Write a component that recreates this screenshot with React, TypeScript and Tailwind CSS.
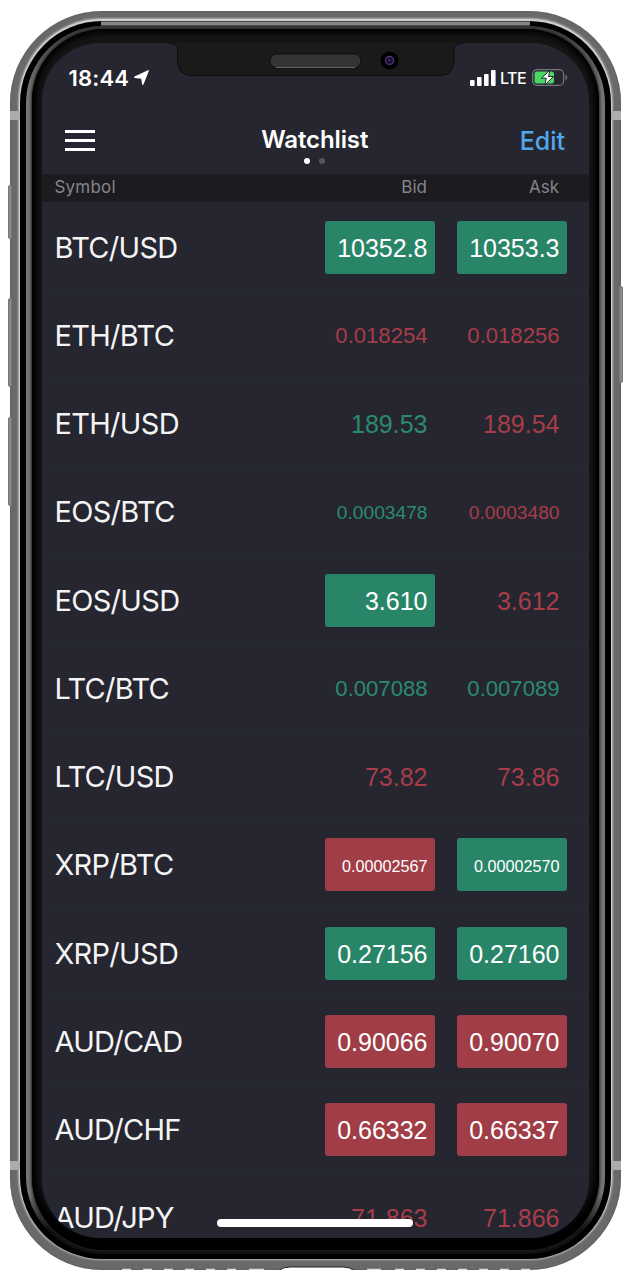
import React from "react";
import clsx from "clsx";

type Side = "up" | "down";

type Price = {
  value: string;
  side: Side;
  filled?: boolean;
};

type Quote = {
  symbol: string;
  bid: Price;
  ask: Price;
};

const up = (value: string, filled = false): Price => ({ value, side: "up", filled });
const down = (value: string, filled = false): Price => ({ value, side: "down", filled });

const quotes: Quote[] = [
  { symbol: "BTC/USD", bid: up("10352.8", true), ask: up("10353.3", true) },
  { symbol: "ETH/BTC", bid: down("0.018254"), ask: down("0.018256") },
  { symbol: "ETH/USD", bid: up("189.53"), ask: down("189.54") },
  { symbol: "EOS/BTC", bid: up("0.0003478"), ask: down("0.0003480") },
  { symbol: "EOS/USD", bid: up("3.610", true), ask: down("3.612") },
  { symbol: "LTC/BTC", bid: up("0.007088"), ask: up("0.007089") },
  { symbol: "LTC/USD", bid: down("73.82"), ask: down("73.86") },
  { symbol: "XRP/BTC", bid: down("0.00002567", true), ask: up("0.00002570", true) },
  { symbol: "XRP/USD", bid: up("0.27156", true), ask: up("0.27160", true) },
  { symbol: "AUD/CAD", bid: down("0.90066", true), ask: down("0.90070", true) },
  { symbol: "AUD/CHF", bid: down("0.66332", true), ask: down("0.66337", true) },
  { symbol: "AUD/JPY", bid: down("71.863"), ask: down("71.866") },
];

// long prices shrink so that they stay inside the cell
function priceSize(value: string) {
  if (value.length >= 10) return "text-[16.2px]";
  if (value.length === 9) return "text-[19.2px]";
  if (value.length === 8) return "text-[22.1px]";
  return "text-[25px]";
}

function PriceCell({ price }: { price: Price }) {
  return (
    <div
      className={clsx(
        "flex h-[53px] w-[110px] items-center justify-end rounded-[3px] pr-[7.5px] pt-[2px] font-['Liberation_Sans',sans-serif] leading-none",
        priceSize(price.value),
        price.filled && "text-white",
        price.filled && (price.side === "up" ? "bg-[#298568]" : "bg-[#a03d47]"),
        !price.filled && (price.side === "up" ? "text-[#2a8b6e]" : "text-[#a73d48]")
      )}
    >
      {price.value}
    </div>
  );
}

function QuoteRow({ quote }: { quote: Quote }) {
  return (
    <div className="flex h-[88.25px] shrink-0 items-center border-b border-[#292a38] pl-[12.5px] pr-[22px] pt-[4px]">
      <p className="flex-1 text-[29px] leading-none tracking-[-0.7px] text-[#f4f4f5]">{quote.symbol}</p>
      <div className="flex gap-[22px]">
        <PriceCell price={quote.bid} />
        <PriceCell price={quote.ask} />
      </div>
    </div>
  );
}

function StatusBar() {
  return (
    <div className="flex h-[69px] shrink-0 items-center justify-between pl-[26.5px] pr-[21px]">
      <div className="flex items-center gap-[5px]">
        <p className="text-[22px] font-semibold leading-none tracking-[0.2px] text-white">18:44</p>
        <svg width="15" height="15" viewBox="0 0 15 15">
          <path d="M14.200 .8 8.800 14.200 7.800 8 .8 7.200Z" fill="#fff" stroke="#fff" strokeWidth="1.400" strokeLinejoin="round" />
        </svg>
      </div>
      <div className="flex items-center">
        <svg width="26" height="16" viewBox="0 0 26 16" fill="#fff">
          <rect x="0" y="10" width="4.6" height="6" rx="1" />
          <rect x="7" y="7" width="4.6" height="9" rx="1" />
          <rect x="14" y="4" width="4.6" height="12" rx="1" />
          <rect x="21" y="0" width="4.6" height="16" rx="1" />
        </svg>
        <p className="ml-[4px] w-[28px] text-[16px] font-medium leading-none tracking-[-0.5px] text-white">LTE</p>
        <svg className="ml-[4px]" width="36" height="17" viewBox="0 0 36 17">
          <rect x=".6" y=".6" width="31" height="15.8" rx="4.5" fill="none" stroke="#777780" strokeWidth="1.2" />
          <path d="M33.500 5.500c2 .8 2 5.200 0 6Z" fill="#777780" />
          <rect x="2.500" y="2.500" width="19.500" height="12" rx="2.500" fill="#4bd763" />
          <path d="M18 1 9.500 9.200h4.800L12.800 16 21.500 7.500h-5Z" fill="#fff" stroke="#262630" strokeWidth="1" />
        </svg>
      </div>
    </div>
  );
}

function NavBar() {
  return (
    <div className="grid h-[61.5px] shrink-0 grid-cols-3 pl-[22.5px] pr-[24px]">
      <div className="flex flex-col gap-[6px] pt-[18px]">
        <span className="h-[3px] w-[30px] bg-white" />
        <span className="h-[3px] w-[30px] bg-white" />
        <span className="h-[3px] w-[30px] bg-white" />
      </div>
      <div className="flex flex-col items-center pt-[16px]">
        <p className="text-[24px] font-semibold leading-[24px] tracking-[-0.1px] text-white">Watchlist</p>
        <div className="mt-[6px] flex gap-[9px]">
          <span className="size-[6px] rounded-full bg-white" />
          <span className="size-[6px] rounded-full bg-[#55555f]" />
        </div>
      </div>
      <p className="pt-[16px] text-right text-[25px] font-medium leading-[26px] text-[#50a7ea]">Edit</p>
    </div>
  );
}

function TableHead() {
  return (
    <div className="flex h-[28px] shrink-0 items-center bg-[#1b1b20] pb-[1px] pl-[12.5px] pr-[30px] text-[17px] leading-none text-[#85858a]">
      <p className="flex-1 tracking-[0.2px]">Symbol</p>
      <p className="w-[110px] text-right">Bid</p>
      <p className="w-[132px] text-right">Ask</p>
    </div>
  );
}

function Notch() {
  return (
    <svg className="absolute left-[127px] top-[-1px]" width="294" height="36" viewBox="0 0 294 36">
      <path d="M0 1.5H2Q8.500 1.500 8.500 9V18Q8.500 33.500 23 33.500H271Q285 33.500 285 18V9Q285 1.500 292 1.500H294V0H0Z" fill="#1a1a1a" stroke="#0c0c0f" />
      <path d="M3 0H291V1.500H3Z" fill="#1a1a1a" />
      <rect x="101" y="12" width="91" height="14" rx="7" fill="#343434" stroke="#0f0f0f" />
      <path d="M107 25.500h79" stroke="#656565" />
      <circle cx="220.500" cy="18.500" r="9" fill="#000" />
      <circle cx="220.500" cy="18.500" r="4" fill="#150c28" stroke="#51358a" strokeWidth="1.300" />
      <circle cx="220.500" cy="18.500" r="1.300" fill="#3f2e60" />
    </svg>
  );
}

function Speakers() {
  return (
    <svg className="absolute bottom-0 left-0" width="611" height="5" viewBox="0 0 611 5">
      <path d="M112 4.500h9M133 4.500h9M154 4.500h9M175 4.500h9M196 4.500h9M217 4.500h9M239 4.500h15M357 4.500h14M385 4.500h9M406 4.500h9M427 4.500h9M448 4.500h9M469 4.500h9M490 4.500h9M511 4.500h9" stroke="#dedede" strokeWidth="1.500" />
      <path d="M269 5.500Q273 2 280 2H333Q340 2 344 5.500Z" fill="#fff" stroke="#222" />
    </svg>
  );
}

function App() {
  return (
    <div className="h-[1286px] w-[640px] overflow-hidden bg-white pl-[10px] pt-[11px] font-['Inter',sans-serif]">
      {/* steel frame */}
      <div className="relative h-[1259px] w-[611px] rounded-[92px] bg-[#696969] p-[10px] shadow-[inset_0_0_2px_#555]">
        {/* side buttons */}
        <span className="absolute left-[-2px] top-[174px] h-[54px] w-[4px] rounded-l-[2px] border border-[#777] bg-[#8a8a8a]" />
        <span className="absolute left-[-2px] top-[287px] h-[89px] w-[4px] rounded-l-[2px] border border-[#777] bg-[#8a8a8a]" />
        <span className="absolute left-[-2px] top-[406px] h-[89px] w-[4px] rounded-l-[2px] border border-[#777] bg-[#8a8a8a]" />
        <span className="absolute right-[-2px] top-[275px] h-[97px] w-[4px] rounded-r-[2px] border border-[#777] bg-[#8a8a8a]" />
        <Speakers />
        {/* polished edge, black gasket and inner bevel */}
        <div className="h-[1238px] rounded-[82px] bg-black shadow-[0_-1px_0_1px_#cfcfcf,0_-1px_2px_2px_#b5b5b5]">
          <div className="flex h-full justify-center rounded-[82px] px-[6px] pb-[5px] pt-[5px]">
            <div className="h-full w-full rounded-[77px] bg-[linear-gradient(#3c3c3c,#757575_5%,#757575_95%,#101010_98%)] px-[6px] pb-[4px] pt-[3px]">
              <div className="h-full rounded-[72px] bg-[#151515] px-[10px] pt-[14px] shadow-[0_0_3px_1px_#222,inset_0_0_6px_4px_#000,inset_0_-14px_8px_#000]">
                <div className="relative flex h-[1195px] w-[547px] flex-col overflow-hidden rounded-[58px] bg-[#262630]">
                  <StatusBar />
                  <NavBar />
                  <TableHead />
                  {quotes.map((quote) => (
                    <QuoteRow quote={quote} key={quote.symbol} />
                  ))}
                  <Notch />
                  <span className="absolute left-[175px] top-[1176px] h-[8px] w-[196px] rounded-full bg-white" />
                </div>
              </div>
            </div>
          </div>
        </div>
        {/* top trim and antenna lines */}
        <span className="absolute left-[91px] top-[10px] h-[5px] w-[429px] border-y border-[#444] bg-[#858585]" />
        <span className="absolute left-0 top-[100px] h-[9px] w-[10px] bg-[#acacac]" />
        <span className="absolute right-0 top-[100px] h-[9px] w-[10px] bg-[#acacac]" />
        <span className="absolute left-0 top-[1150px] h-[9px] w-[10px] bg-[#acacac]" />
        <span className="absolute right-0 top-[1150px] h-[9px] w-[10px] bg-[#acacac]" />
      </div>
    </div>
  );
}

export default App;
